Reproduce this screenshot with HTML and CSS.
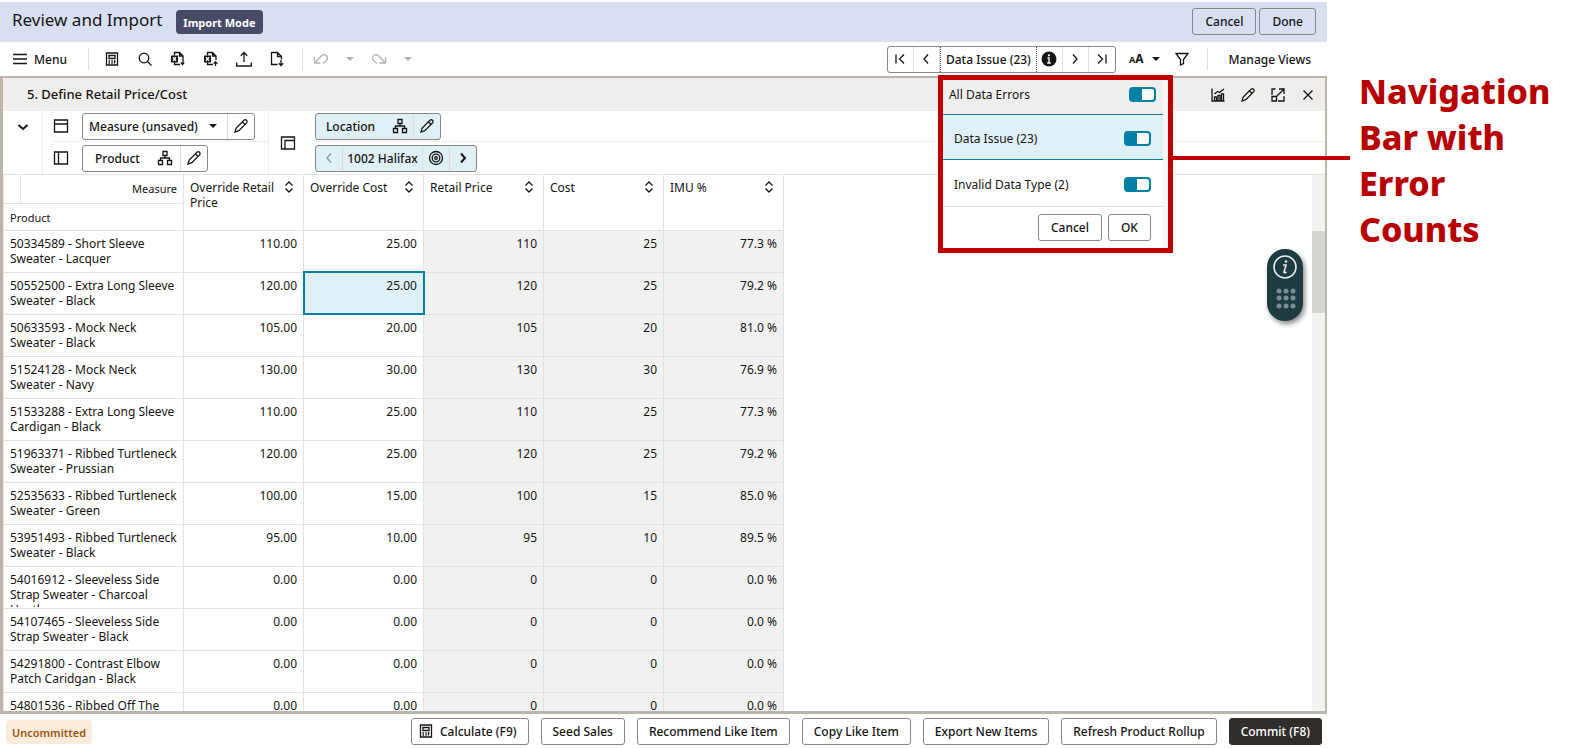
FILE: index.html
```html
<!DOCTYPE html>
<html lang="en">

<head>
    <meta charset="UTF-8">
    <meta name="viewport" content="width=device-width, initial-scale=1.0">
    <title>Review and Import</title>
    <link rel="stylesheet" href="styles.css">
</head>

<body>
    <svg class="sprite" aria-hidden="true">
        <symbol id="menu" viewBox="0 0 16 16"><path d="M1 3.5h14M1 8h14M1 12.5h14" /></symbol>
        <symbol id="calc" viewBox="0 0 16 16"><path d="M2.5 2h11v12h-11zM5 4.500h6v3H5zM4.500 10h1.500M7.300 10h1.500M10 10h1.500M4.500 12h1.500M7.300 12h1.500M10.500 9.500v3" /></symbol>
        <symbol id="search" viewBox="0 0 16 16"><circle cx="7" cy="7" r="4.800" /><path d="M10.500 10.500L14.500 14.500" /></symbol>
        <symbol id="xls-down" viewBox="0 0 16 16"><path d="M4.500 4.500V1.500h5l3.500 3.500v7M9.500 1.500v3.500H13M4.500 11v2.500h5.500" /><path class="solid" d="M1 4.500h7v7H1zM10 11.500h5l-2.500 3z" /><path class="light" d="M3 6.300l3 3.400M6 6.300l-3 3.400" /></symbol>
        <symbol id="xls-up" viewBox="0 0 16 16"><path d="M4.500 4.500V1.500h5l3.500 3.500v4M9.500 1.500v3.500H13M4.500 11v2.500h5.500M12.500 11v4" /><path class="solid" d="M1 4.500h7v7H1zM10 12.800h5l-2.500-3z" /><path class="light" d="M3 6.300l3 3.400M6 6.300l-3 3.400" /></symbol>
        <symbol id="upload" viewBox="0 0 16 16"><path d="M8 11V1.500M4.800 4.700L8 1.500l3.200 3.200M.7 11.500v3.500h14.600v-3.500" /></symbol>
        <symbol id="export" viewBox="0 0 16 16"><path d="M8.500 13.500h-6v-12h6l4 4v3M8.500 1.500v4h4M12 9v5.500M9.800 12.300l2.200 2.200 2.200-2.200" /></symbol>
        <symbol id="undo" viewBox="0 0 16 16"><path d="M1.500 6v6h6M1.700 11.800L8 5.200c4-4 8.500 1 5 4.700l-3 2.600" /></symbol>
        <symbol id="redo" viewBox="0 0 16 16"><path d="M14.500 6v6h-6M14.300 11.800L8 5.200c-4-4-8.500 1-5 4.700l3 2.600" /></symbol>
        <symbol id="caret" viewBox="0 0 8 8"><path class="solid" d="M0 2h8L4 6z" /></symbol>
        <symbol id="first" viewBox="0 0 16 16"><path d="M4 3.500v9M12 3.500L7.500 8l4.500 4.500" /></symbol>
        <symbol id="prev" viewBox="0 0 16 16"><path d="M10 3.500L6 8l4 4.500" /></symbol>
        <symbol id="next" viewBox="0 0 16 16"><path d="M6 3.500L10 8l-4 4.500" /></symbol>
        <symbol id="last" viewBox="0 0 16 16"><path d="M12 3.500v9M4 3.500L8.500 8 4 12.500" /></symbol>
        <symbol id="info" viewBox="0 0 16 16"><circle class="solid" cx="8" cy="8" r="7.500" /><path class="light" d="M6.500 7H8v5M6.200 12h3.600" /><circle class="dot" cx="8" cy="4.300" r="1.100" /></symbol>
        <symbol id="filter" viewBox="0 0 16 16"><path d="M2 2.500h12L9.500 8.500v4l-3 1.500V8.500z" /></symbol>
        <symbol id="chart" viewBox="0 0 16 16"><path d="M2 1.500v12.500h12.500M4.500 14v-4h2v4M8 14V8.500h2V14M11.500 14V7h2v7M4.500 7l3-2.500 2 1 4.500-3.500" /></symbol>
        <symbol id="pencil" viewBox="0 0 16 16"><path d="M2 14l1.200-4 8-8q1.300-.8 2.300.3t.3 2.300l-8 8zM9.500 4l2.600 2.600" /></symbol>
        <symbol id="expand" viewBox="0 0 16 16"><path d="M2 8V2h3.500M14 9v5H8M2 9.500h4.500V14H2zM6 10l8-8M9 2h5v5" /></symbol>
        <symbol id="close" viewBox="0 0 16 16"><path d="M3.500 3.500l9 9M12.500 3.500l-9 9" /></symbol>
        <symbol id="down" viewBox="0 0 16 16"><path d="M3.500 6L8 10l4.500-4" /></symbol>
        <symbol id="rows" viewBox="0 0 16 16"><path d="M1.500 2h13v12h-13zM1.500 6h13" /></symbol>
        <symbol id="cols" viewBox="0 0 16 16"><path d="M1.500 2h13v12h-13zM5.500 2v12" /></symbol>
        <symbol id="page" viewBox="0 0 16 16"><path d="M1.500 2h13v12h-13zM5 14V5.500h9.500" /></symbol>
        <symbol id="tree" viewBox="0 0 16 16"><path d="M6 1.500h4v4H6zM1.500 10.500h4v4h-4zM10.500 10.500h4v4h-4zM8 5.500V8M3.500 10.500V8h9v2.500" /></symbol>
        <symbol id="target" viewBox="0 0 16 16"><circle cx="8" cy="8" r="6.500" /><circle cx="8" cy="8" r="3.800" /><circle cx="8" cy="8" r="1.300" /></symbol>
        <symbol id="sort" viewBox="0 0 10 12"><path d="M1.500 4.500L5 1l3.500 3.500M1.500 7.500L5 11l3.500-3.500" /></symbol>
    </svg>

    <main class="app">
        <header class="page-header">
            <h1>Review and Import</h1>
            <span class="mode">Import Mode</span>
            <div class="header-actions">
                <button class="btn">Cancel</button>
                <button class="btn">Done</button>
            </div>
        </header>

        <nav class="toolbar">
            <button class="menu-btn"><svg><use href="#menu" /></svg>Menu</button>
            <span class="sep"></span>
            <div class="tools">
                <button aria-label="Calculate"><svg><use href="#calc" /></svg></button>
                <button aria-label="Search"><svg><use href="#search" /></svg></button>
                <button aria-label="Export to Excel"><svg><use href="#xls-down" /></svg></button>
                <button aria-label="Import from Excel"><svg><use href="#xls-up" /></svg></button>
                <button aria-label="Upload"><svg><use href="#upload" /></svg></button>
                <button aria-label="Export file"><svg><use href="#export" /></svg></button>
            </div>
            <span class="sep"></span>
            <div class="history">
                <button aria-label="Undo"><svg><use href="#undo" /></svg></button>
                <button aria-label="Undo list"><svg class="caret"><use href="#caret" /></svg></button>
                <button aria-label="Redo"><svg><use href="#redo" /></svg></button>
                <button aria-label="Redo list"><svg class="caret"><use href="#caret" /></svg></button>
            </div>

            <div class="issue-nav">
                <button aria-label="First"><svg><use href="#first" /></svg></button>
                <button aria-label="Previous"><svg><use href="#prev" /></svg></button>
                <button class="issue-label">Data Issue (23)</button>
                <button class="issue-info" aria-label="Details"><svg><use href="#info" /></svg></button>
                <button aria-label="Next"><svg><use href="#next" /></svg></button>
                <button aria-label="Last"><svg><use href="#last" /></svg></button>

                <div class="issue-menu">
                    <div class="menu-head">
                        <label for="all">All Data Errors</label>
                        <input type="checkbox" id="all" class="switch" checked>
                    </div>
                    <div class="menu-item selected">
                        <label for="issue">Data Issue (23)</label>
                        <input type="checkbox" id="issue" class="switch" checked>
                    </div>
                    <div class="menu-item">
                        <label for="invalid">Invalid Data Type (2)</label>
                        <input type="checkbox" id="invalid" class="switch" checked>
                    </div>
                    <div class="menu-foot">
                        <button class="btn">Cancel</button>
                        <button class="btn">OK</button>
                    </div>
                </div>
            </div>
            <button class="text-size"><span><small>A</small>A</span><svg class="caret"><use href="#caret" /></svg></button>
            <button class="filter" aria-label="Filter"><svg><use href="#filter" /></svg></button>
            <span class="sep"></span>
            <button class="views">Manage Views</button>
        </nav>

        <section class="panel">
            <div class="panel-head">
                <h2>5. Define Retail Price/Cost</h2>
                <button aria-label="Chart"><svg><use href="#chart" /></svg></button>
                <button aria-label="Edit"><svg><use href="#pencil" /></svg></button>
                <button aria-label="Maximize"><svg><use href="#expand" /></svg></button>
                <button aria-label="Close"><svg><use href="#close" /></svg></button>
            </div>

            <div class="axes">
                <button class="collapse" aria-label="Collapse"><svg class="bold"><use href="#down" /></svg></button>
                <div class="axis-col">
                    <div class="axis">
                        <svg><use href="#rows" /></svg>
                        <div class="chip">
                            <select class="measure" aria-label="Measure profile">
                                <option>Measure (unsaved)</option>
                            </select>
                            <svg class="caret"><use href="#caret" /></svg>
                            <button aria-label="Edit measures"><svg><use href="#pencil" /></svg></button>
                        </div>
                    </div>
                    <div class="axis">
                        <svg><use href="#cols" /></svg>
                        <div class="chip">
                            <button class="dim">Product<svg><use href="#tree" /></svg></button>
                            <button aria-label="Edit product"><svg><use href="#pencil" /></svg></button>
                        </div>
                    </div>
                </div>
                <div class="page-icon"><svg><use href="#page" /></svg></div>
                <div class="axis-page">
                    <div class="axis">
                        <div class="chip blue">
                            <button class="dim">Location<svg><use href="#tree" /></svg></button>
                            <button aria-label="Edit location"><svg><use href="#pencil" /></svg></button>
                        </div>
                    </div>
                    <div class="axis">
                        <div class="chip blue">
                            <button class="off" aria-label="Previous location"><svg><use href="#prev" /></svg></button>
                            <button class="member">1002 Halifax</button>
                            <button aria-label="Find"><svg><use href="#target" /></svg></button>
                            <button aria-label="Next location"><svg class="bold"><use href="#next" /></svg></button>
                        </div>
                    </div>
                </div>
            </div>

            <div class="grid">
                <table>
                    <thead>
                        <tr>
                            <th class="gutter"></th>
                            <th class="measure-head">Measure</th>
                            <th rowspan="2"><div>Override Retail Price<svg><use href="#sort" /></svg></div></th>
                            <th rowspan="2"><div>Override Cost<svg><use href="#sort" /></svg></div></th>
                            <th rowspan="2"><div>Retail Price<svg><use href="#sort" /></svg></div></th>
                            <th rowspan="2"><div>Cost<svg><use href="#sort" /></svg></div></th>
                            <th rowspan="2"><div>IMU %<svg><use href="#sort" /></svg></div></th>
                        </tr>
                        <tr>
                            <th class="product-head" colspan="2">Product</th>
                        </tr>
                    </thead>
                    <tbody id="rows-body"></tbody>
                </table>
                <div class="scrollbar"><div class="thumb"></div></div>
                <div class="helper">
                    <svg viewBox="0 0 36 72">
                        <circle class="ring" cx="18" cy="18" r="11" />
                        <path class="stem" d="M16 16h3l-2 7q0 1.500 2.500 0" />
                        <circle cx="19" cy="12.500" r="1.300" />
                        <g class="dots">
                            <circle cx="12" cy="42" r="2.500" /><circle cx="19" cy="42" r="2.500" /><circle cx="26" cy="42" r="2.500" />
                            <circle cx="12" cy="49" r="2.500" /><circle cx="19" cy="49" r="2.500" /><circle cx="26" cy="49" r="2.500" />
                            <circle cx="12" cy="57" r="2.500" /><circle cx="19" cy="57" r="2.500" /><circle cx="26" cy="57" r="2.500" />
                        </g>
                    </svg>
                </div>
            </div>
        </section>

        <footer class="page-footer">
            <span class="status">Uncommitted</span>
            <button class="btn calc"><svg><use href="#calc" /></svg>Calculate (F9)</button>
            <button class="btn">Seed Sales</button>
            <button class="btn">Recommend Like Item</button>
            <button class="btn">Copy Like Item</button>
            <button class="btn">Export New Items</button>
            <button class="btn">Refresh Product Rollup</button>
            <button class="btn dark">Commit (F8)</button>
        </footer>
    </main>

    <aside class="callout">Navigation Bar with Error Counts</aside>

    <script>
        const rows = [
            ['50334589 - Short Sleeve Sweater - Lacquer', '110.00', '25.00', '110', '25', '77.3 %'],
            ['50552500 - Extra Long Sleeve Sweater - Black', '120.00', '25.00', '120', '25', '79.2 %'],
            ['50633593 - Mock Neck Sweater - Black', '105.00', '20.00', '105', '20', '81.0 %'],
            ['51524128 - Mock Neck Sweater - Navy', '130.00', '30.00', '130', '30', '76.9 %'],
            ['51533288 - Extra Long Sleeve Cardigan - Black', '110.00', '25.00', '110', '25', '77.3 %'],
            ['51963371 - Ribbed Turtleneck Sweater - Prussian', '120.00', '25.00', '120', '25', '79.2 %'],
            ['52535633 - Ribbed Turtleneck Sweater - Green', '100.00', '15.00', '100', '15', '85.0 %'],
            ['53951493 - Ribbed Turtleneck Sweater - Black', '95.00', '10.00', '95', '10', '89.5 %'],
            ['54016912 - Sleeveless Side Strap Sweater - Charcoal Heather', '0.00', '0.00', '0', '0', '0.0 %'],
            ['54107465 - Sleeveless Side Strap Sweater - Black', '0.00', '0.00', '0', '0', '0.0 %'],
            ['54291800 - Contrast Elbow Patch Caridgan - Black', '0.00', '0.00', '0', '0', '0.0 %'],
            ['54801536 - Ribbed Off The', '0.00', '0.00', '0', '0', '0.0 %']
        ];

        document.getElementById('rows-body').innerHTML = rows.map((row, r) => {
            const cells = row.slice(1).map((value, c) => {
                let cls = c > 1 ? 'readonly' : '';
                if (r === 1 && c === 1) cls = 'active';
                return `<td class="${cls}">${value}</td>`;
            }).join('');
            return `<tr><th class="row-head" colspan="2"><div>${row[0]}</div></th>${cells}</tr>`;
        }).join('');
    </script>
</body>

</html>
```

FILE: styles.css
```css
* {
    box-sizing: border-box;
}

body {
    display: flex;
    height: 100vh;
    margin: 0;
    overflow: hidden;
    background: white;
    color: #161513;
    font-family: "Noto Sans", "Open Sans", sans-serif;
    font-size: 12px;
    line-height: 15px;
}

.sprite {
    position: absolute;
    width: 0;
    height: 0;
}

svg {
    width: 16px;
    height: 16px;
    flex: none;
    fill: none;
    stroke: currentColor;
    stroke-width: 1.3;
}

.solid {
    fill: currentColor;
    stroke: none;
}

.light {
    stroke: white;
}

.dot {
    fill: white;
    stroke: none;
}

svg.caret {
    width: 8px;
    height: 8px;
}

svg.bold {
    stroke-width: 2;
}

button {
    display: flex;
    align-items: center;
    justify-content: center;
    padding: 0;
    border: none;
    background: none;
    color: inherit;
    font: inherit;
    font-weight: 500;
    white-space: nowrap;
    cursor: pointer;
}

.btn {
    height: 27px;
    padding: 0 12px;
    border: 1px solid #8a8885;
    border-radius: 3px;
    background: white;
}

.app {
    display: flex;
    flex: 1;
    flex-direction: column;
    min-width: 0;
    padding-top: 2px;
}

/* header */
.page-header {
    display: flex;
    align-items: center;
    height: 40px;
    padding: 0 11px 0 12px;
    border-bottom: 1px solid #dfe0e3;
    background: #d9dff3;
}

.page-header h1 {
    margin: 0 0 3px;
    font-size: 17px;
    font-weight: 400;
    line-height: 24px;
}

.mode {
    margin-left: 14px;
    padding: 5px 7px 4px;
    border-radius: 4px;
    background: #474b66;
    color: white;
    font-size: 11px;
    font-weight: 700;
}

.header-actions {
    display: flex;
    gap: 3px;
    margin-left: auto;
}

.header-actions .btn {
    background: none;
}

/* toolbar */
.toolbar {
    display: flex;
    align-items: center;
    height: 34px;
    padding: 0 16px 0 12px;
}

.toolbar button {
    height: 26px;
}

.sep {
    width: 1px;
    height: 22px;
    background: #dedcda;
}

.menu-btn {
    gap: 6px;
    margin-right: 21px;
}

.tools,
.history {
    display: flex;
}

.tools {
    margin: 0 8px 0 7px;
}

.tools button {
    width: 33px;
}

.history {
    margin-left: 4px;
    color: #b5b3b0;
}

.history button {
    width: 29px;
}

.issue-nav {
    position: relative;
    display: flex;
    margin-left: auto;
    border: 1px solid #8a8885;
    border-radius: 3px;
}

.issue-nav > button {
    width: 26px;
    height: 25px;
    border-right: 1px solid #dedcda;
}

.issue-nav > button:nth-of-type(6) {
    border-right: none;
}

.issue-nav > .issue-label {
    width: 97px;
    border-right: 1px dotted #555;
    border-left: 1px dotted #555;
}

.text-size {
    gap: 9px;
    margin-left: 13px;
}

.toolbar .text-size {
    font-weight: 700;
}

.text-size small {
    font-size: 9px;
}

.filter {
    margin: 0 17px 0 14px;
}

.views {
    margin-left: 20px;
}

/* issue menu with its red highlight frame */
.issue-menu {
    position: absolute;
    z-index: 2;
    top: 28px;
    left: 50px;
    width: 235px;
    padding-right: 5px;
    border: 5px solid #c00000;
    background: #f7f7f7;
}

.issue-menu::after {
    content: "";
    position: absolute;
    top: 76px;
    left: 230px;
    width: 177px;
    height: 4px;
    background: #c00000;
}

.menu-head,
.menu-item,
.menu-foot {
    display: flex;
    align-items: center;
    justify-content: space-between;
    background: white;
}

.menu-head {
    height: 34px;
    padding: 0 7px 4px 6px;
    background: #f0efef;
}

.menu-item {
    height: 46px;
    padding: 3px 12px 0 11px;
}

.menu-item.selected {
    border-top: 1px solid #0080a6;
    border-bottom: 1px solid #0080a6;
    background: #e0f0f7;
}

.menu-foot {
    justify-content: flex-end;
    gap: 6px;
    height: 42px;
    padding-right: 12px;
    border-top: 1px solid #e3e2e1;
}

.toolbar .menu-foot .btn {
    height: 27px;
    padding: 0 12px;
}

.switch {
    width: 27px;
    height: 15px;
    margin: 0;
    border: 2px solid #0080a6;
    border-radius: 4px;
    background: linear-gradient(to right, #0080a6 11px, white 11px);
    appearance: none;
}

/* panel */
.panel {
    display: flex;
    flex: 1;
    flex-direction: column;
    min-height: 0;
    border: 3px solid #bbb5ae;
    border-width: 2px 2px 3px 3px;
}

.panel-head {
    display: flex;
    align-items: center;
    height: 33px;
    padding: 0 2px 0 24px;
    background: #f0eeec;
}

.panel-head h2 {
    flex: 1;
    margin: 0;
    font-size: 13px;
    font-weight: 500;
}

.panel-head button {
    width: 30px;
}

.axes {
    display: flex;
    border-bottom: 1px solid #e3e2e1;
}

.collapse {
    align-items: flex-start;
    width: 40px;
    padding-top: 8px;
    border-right: 1px solid #efeeed;
}

.axis {
    display: flex;
    align-items: center;
    gap: 13px;
    height: 32px;
}

.axis:first-child {
    height: 31px;
    border-bottom: 1px solid #efeeed;
}

.axis-col {
    width: 226px;
    padding-left: 10px;
    border-right: 1px solid #efeeed;
}

.page-icon {
    display: flex;
    align-items: center;
    width: 46px;
    padding-left: 11px;
}

.axis-page {
    flex: 1;
}

.chip {
    display: flex;
    align-items: center;
    height: 27px;
    border: 1px solid #8a8885;
    border-radius: 3px;
}

.chip > button {
    width: 27px;
    height: 25px;
    border-left: 1px solid #dedcda;
}

.chip > button:first-child {
    width: 26px;
    border-left: none;
}

.chip > .dim:first-child {
    width: 97px;
    gap: 17px;
    padding-left: 5px;
}

.chip > .member {
    width: 80px;
}

.chip .off {
    color: #8d9599;
}

.blue {
    background: #e0f0f7;
}

.measure {
    width: 126px;
    padding: 0 0 0 6px;
    border: none;
    background: none;
    color: inherit;
    font: inherit;
    font-weight: 500;
    appearance: none;
}

.chip > .caret {
    margin-right: 10px;
}

/* grid */
.grid {
    position: relative;
    display: flex;
    flex: 1;
    justify-content: space-between;
    min-height: 0;
    overflow: hidden;
}

table {
    align-self: flex-start;
    width: 780px;
    border-collapse: collapse;
    table-layout: fixed;
}

th,
td {
    height: 42px;
    padding: 5px 6px;
    border: 1px solid #e3e2e1;
    border-top: none;
    font-weight: 400;
    text-align: left;
    vertical-align: top;
}

thead th {
    width: 120px;
}

thead .gutter,
thead .measure-head,
thead .product-head {
    height: 28px;
    padding-top: 6px;
    font-size: 11px;
}

thead .product-head {
    height: 27px;
}

thead .gutter {
    width: 17px;
}

thead .measure-head {
    width: 163px;
    text-align: right;
}

thead div {
    display: flex;
    justify-content: space-between;
}

thead svg {
    width: 10px;
    height: 12px;
    margin: 1px 3px 0 0;
}

.row-head div {
    height: 35px;
    margin-bottom: -5px;
    overflow: hidden;
}

td {
    text-align: right;
}

.readonly {
    background: #f1f1f1;
}

.active {
    outline: 2px solid #0080a6;
    outline-offset: -1px;
    background: #e0f0f7;
}

.scrollbar {
    width: 13px;
    padding-top: 56px;
    background: #f3f3f3;
}

.thumb {
    height: 82px;
    background: #d5d5d4;
}

.helper {
    position: absolute;
    top: 74px;
    right: 22px;
    width: 36px;
    height: 72px;
    border-radius: 18px;
    background: #1e3c40;
    box-shadow: 2px 3px 5px rgba(0, 0, 0, 0.45);
}

.helper svg {
    width: 36px;
    height: 72px;
    fill: #e4eaea;
    stroke: none;
}

.helper .ring,
.helper .stem {
    fill: none;
    stroke: #e4eaea;
    stroke-width: 1.6;
}

.helper .dots {
    fill: #7b8d90;
}

/* footer */
.page-footer {
    display: flex;
    align-items: center;
    gap: 12px;
    height: 34px;
    padding: 0 5px 0 6px;
}

.page-footer .btn {
    padding: 0 11px;
}

.status {
    margin: 2px auto 0 0;
    padding: 5px 6px 4px;
    border-radius: 4px;
    background: #fdecdb;
    color: #9a5610;
    font-size: 11px;
    font-weight: 600;
}

.page-footer .calc {
    gap: 6px;
    padding-left: 6px;
}

.dark {
    border-color: #312d2a;
    background: #312d2a;
    color: white;
}

.callout {
    width: 244px;
    padding: 68px 20px 0 32px;
    color: #b80000;
    font-size: 34px;
    font-weight: 800;
    line-height: 46px;
}
```
